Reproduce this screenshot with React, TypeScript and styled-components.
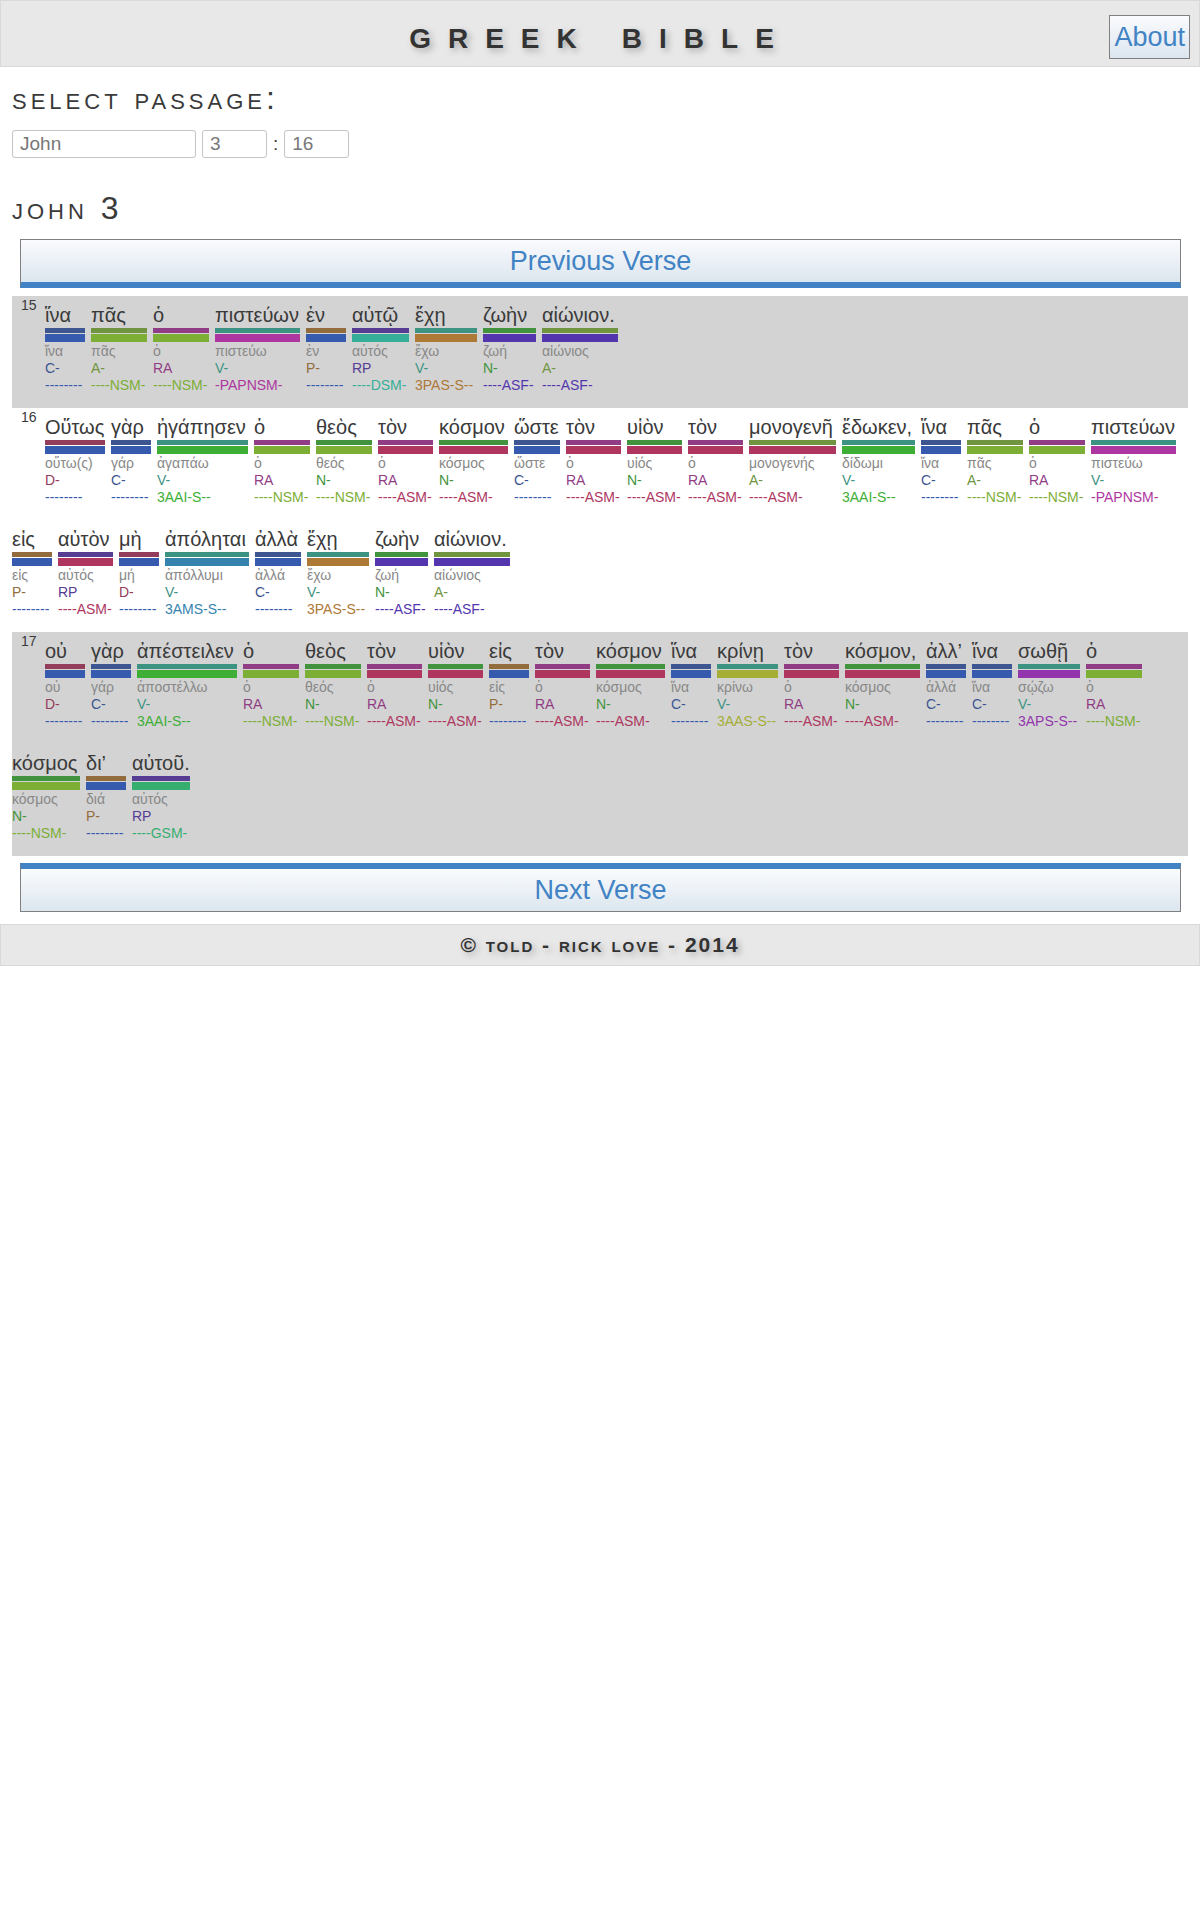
import React from "react";
import styled, { createGlobalStyle } from "styled-components";

const GlobalStyle = createGlobalStyle`
  *, *::before, *::after { box-sizing: border-box; }
  body {
    margin: 0;
    background: #fff;
    color: #3a3a3a;
    font-family: "Liberation Sans", Arial, sans-serif;
    font-size: 19px;
  }
`;

const partColors: Record<string, string> = {
  "C-": "#3d5691",
  "A-": "#709440",
  RA: "#913d85",
  "V-": "#3d9381",
  "P-": "#936c3d",
  RP: "#563d93",
  "N-": "#41933d",
  "D-": "#933d5a",
};

const parseColors: Record<string, string> = {
  "--------": "#365aae",
  "----NSM-": "#7dae36",
  "-PAPNSM-": "#ae36a0",
  "----DSM-": "#36ae97",
  "3PAS-S--": "#ae7836",
  "----ASF-": "#5336ae",
  "3AAI-S--": "#3eae36",
  "----ASM-": "#ae365f",
  "3AMS-S--": "#3683ae",
  "3AAS-S--": "#a5ae36",
  "3APS-S--": "#9336ae",
  "----GSM-": "#36ae70",
};

type WordData = [text: string, lemma: string, part: string, parse: string, width: number];

const verses: { number: number; words: WordData[] }[] = [
  {
    number: 15,
    words: [
      ["ἵνα", "ἵνα", "C-", "--------", 40],
      ["πᾶς", "πᾶς", "A-", "----NSM-", 56],
      ["ὁ", "ὁ", "RA", "----NSM-", 56],
      ["πιστεύων", "πιστεύω", "V-", "-PAPNSM-", 85],
      ["ἐν", "ἐν", "P-", "--------", 40],
      ["αὐτῷ", "αὐτός", "RP", "----DSM-", 57],
      ["ἔχῃ", "ἔχω", "V-", "3PAS-S--", 62],
      ["ζωὴν", "ζωή", "N-", "----ASF-", 53],
      ["αἰώνιον.", "αἰώνιος", "A-", "----ASF-", 76],
    ],
  },
  {
    number: 16,
    words: [
      ["Οὕτως", "οὕτω(ς)", "D-", "--------", 60],
      ["γὰρ", "γάρ", "C-", "--------", 40],
      ["ἠγάπησεν", "ἀγαπάω", "V-", "3AAI-S--", 91],
      ["ὁ", "ὁ", "RA", "----NSM-", 56],
      ["θεὸς", "θεός", "N-", "----NSM-", 56],
      ["τὸν", "ὁ", "RA", "----ASM-", 55],
      ["κόσμον", "κόσμος", "N-", "----ASM-", 69],
      ["ὥστε", "ὥστε", "C-", "--------", 46],
      ["τὸν", "ὁ", "RA", "----ASM-", 55],
      ["υἱὸν", "υἱός", "N-", "----ASM-", 55],
      ["τὸν", "ὁ", "RA", "----ASM-", 55],
      ["μονογενῆ", "μονογενής", "A-", "----ASM-", 87],
      ["ἔδωκεν,", "δίδωμι", "V-", "3AAI-S--", 73],
      ["ἵνα", "ἵνα", "C-", "--------", 40],
      ["πᾶς", "πᾶς", "A-", "----NSM-", 56],
      ["ὁ", "ὁ", "RA", "----NSM-", 56],
      ["πιστεύων", "πιστεύω", "V-", "-PAPNSM-", 85],
      ["εἰς", "εἰς", "P-", "--------", 40],
      ["αὐτὸν", "αὐτός", "RP", "----ASM-", 55],
      ["μὴ", "μή", "D-", "--------", 40],
      ["ἀπόληται", "ἀπόλλυμι", "V-", "3AMS-S--", 84],
      ["ἀλλὰ", "ἀλλά", "C-", "--------", 46],
      ["ἔχῃ", "ἔχω", "V-", "3PAS-S--", 62],
      ["ζωὴν", "ζωή", "N-", "----ASF-", 53],
      ["αἰώνιον.", "αἰώνιος", "A-", "----ASF-", 76],
    ],
  },
  {
    number: 17,
    words: [
      ["οὐ", "οὐ", "D-", "--------", 40],
      ["γὰρ", "γάρ", "C-", "--------", 40],
      ["ἀπέστειλεν", "ἀποστέλλω", "V-", "3AAI-S--", 100],
      ["ὁ", "ὁ", "RA", "----NSM-", 56],
      ["θεὸς", "θεός", "N-", "----NSM-", 56],
      ["τὸν", "ὁ", "RA", "----ASM-", 55],
      ["υἱὸν", "υἱός", "N-", "----ASM-", 55],
      ["εἰς", "εἰς", "P-", "--------", 40],
      ["τὸν", "ὁ", "RA", "----ASM-", 55],
      ["κόσμον", "κόσμος", "N-", "----ASM-", 69],
      ["ἵνα", "ἵνα", "C-", "--------", 40],
      ["κρίνῃ", "κρίνω", "V-", "3AAS-S--", 61],
      ["τὸν", "ὁ", "RA", "----ASM-", 55],
      ["κόσμον,", "κόσμος", "N-", "----ASM-", 75],
      ["ἀλλ’", "ἀλλά", "C-", "--------", 40],
      ["ἵνα", "ἵνα", "C-", "--------", 40],
      ["σωθῇ", "σῴζω", "V-", "3APS-S--", 62],
      ["ὁ", "ὁ", "RA", "----NSM-", 56],
      ["κόσμος", "κόσμος", "N-", "----NSM-", 68],
      ["δι’", "διά", "P-", "--------", 40],
      ["αὐτοῦ.", "αὐτός", "RP", "----GSM-", 58],
    ],
  },
];

const Header = styled.header`
  display: grid;
  grid-template-columns: 1fr auto 1fr;
  align-items: center;
  height: 67px;
  padding: 6px 9px 0;
  background: #e8e8e8;
  border: 1px solid #d9d9d9;
`;

const Title = styled.h1`
  grid-column: 2;
  margin: 0;
  padding-bottom: 6px;
  font-size: 40px;
  line-height: 44px;
  font-variant: small-caps;
  letter-spacing: 17px;
  color: #333;
  text-shadow: 3px 3px 6px #aaa;
`;

const Button = styled.button`
  padding: 0 4px;
  border: 1px solid #808080;
  border-radius: 0;
  background: linear-gradient(#fafbfd, #dce6ef);
  color: #4183c4;
  font: 27px / 42px "Liberation Sans", Arial, sans-serif;
  cursor: pointer;
`;

const AboutButton = styled(Button)`
  justify-self: end;
`;

const VerseButton = styled(Button)<{ $edge: "top" | "bottom" }>`
  display: block;
  width: calc(100% - 15px);
  margin: 7px 7px 8px 8px;
  border-${(p) => p.$edge}: 6px solid #4183c4;
`;

const Main = styled.main`
  padding: 11px 12px 4px;
`;

const Heading = styled.h2`
  margin: 0 0 4px;
  font-size: 32px;
  line-height: 40px;
  font-weight: normal;
  font-variant: small-caps;
  letter-spacing: 4px;
`;

/* Flow root keeps the heading's and the button's margins from collapsing. */
const Chapter = styled.div`
  display: flow-root;
`;

const PassageForm = styled.form`
  display: flex;
  align-items: center;
  gap: 6px;
  padding: 8px 0 30px;
`;

const Field = styled.input<{ $wide?: boolean }>`
  width: ${(p) => (p.$wide ? 184 : 65)}px;
  height: 28px;
  padding: 0 7px;
  border: 1px solid #c4c4c4;
  border-radius: 3px;
  background: #fff;
  color: #777;
  font: 19px "Liberation Sans", Arial, sans-serif;
`;

const Verse = styled.section<{ $shaded: boolean }>`
  display: flex;
  flex-wrap: wrap;
  column-gap: 6px;
  background: ${(p) => (p.$shaded ? "#d3d3d3" : "transparent")};
`;

const VerseNumber = styled.span`
  width: 27px;
  padding: 1px 0 0 9px;
  font-size: 14px;
  line-height: 17px;
`;

const Word = styled.div<{ $width: number }>`
  width: ${(p) => p.$width}px;
  height: 112px;
  padding-top: 7px;
  font-size: 14px;
  line-height: 17px;
  white-space: nowrap;
`;

const Greek = styled.div`
  height: 25px;
  font-size: 20px;
  line-height: 24px;
`;

const Bar = styled.div<{ $color: string; $height: number }>`
  height: ${(p) => p.$height}px;
  margin-bottom: 1px;
  background: ${(p) => p.$color};
`;

const Lemma = styled.div`
  color: #888;
`;

const Code = styled.div<{ $color: string }>`
  color: ${(p) => p.$color};
`;

const Footer = styled.footer`
  height: 42px;
  background: #e8e8e8;
  border: 1px solid #d9d9d9;
  color: #333;
  font-size: 21px;
  line-height: 40px;
  font-weight: bold;
  font-variant: small-caps;
  letter-spacing: 2px;
  text-align: center;
  text-shadow: 3px 3px 6px #aaa;
`;

function WordBlock({ word }: { word: WordData }) {
  const [text, lemma, part, parse, width] = word;
  return (
    <Word $width={width}>
      <Greek>{text}</Greek>
      <Bar $color={partColors[part]} $height={5} />
      <Bar $color={parseColors[parse]} $height={8} />
      <Lemma>{lemma}</Lemma>
      <Code $color={partColors[part]}>{part}</Code>
      <Code $color={parseColors[parse]}>{parse}</Code>
    </Word>
  );
}

export default function App() {
  return (
    <>
      <GlobalStyle />
      <Header>
        <Title>greek bible</Title>
        <AboutButton type="button">About</AboutButton>
      </Header>
      <Main>
        <Heading>select passage:</Heading>
        <PassageForm onSubmit={(e) => e.preventDefault()}>
          <Field $wide aria-label="Book" defaultValue="John" />
          <Field aria-label="Chapter" defaultValue="3" />
          <span>:</span>
          <Field aria-label="Verse" defaultValue="16" />
        </PassageForm>
        <Heading>john 3</Heading>
        <Chapter>
          <VerseButton type="button" $edge="bottom">Previous Verse</VerseButton>
          {verses.map((verse) => (
            <Verse key={verse.number} $shaded={verse.number % 2 === 1} lang="grc">
              <VerseNumber>{verse.number}</VerseNumber>
              {verse.words.map((word, i) => (
                <WordBlock key={i} word={word} />
              ))}
            </Verse>
          ))}
          <VerseButton type="button" $edge="top">Next Verse</VerseButton>
        </Chapter>
      </Main>
      <Footer>© told - rick love - 2014</Footer>
    </>
  );
}
